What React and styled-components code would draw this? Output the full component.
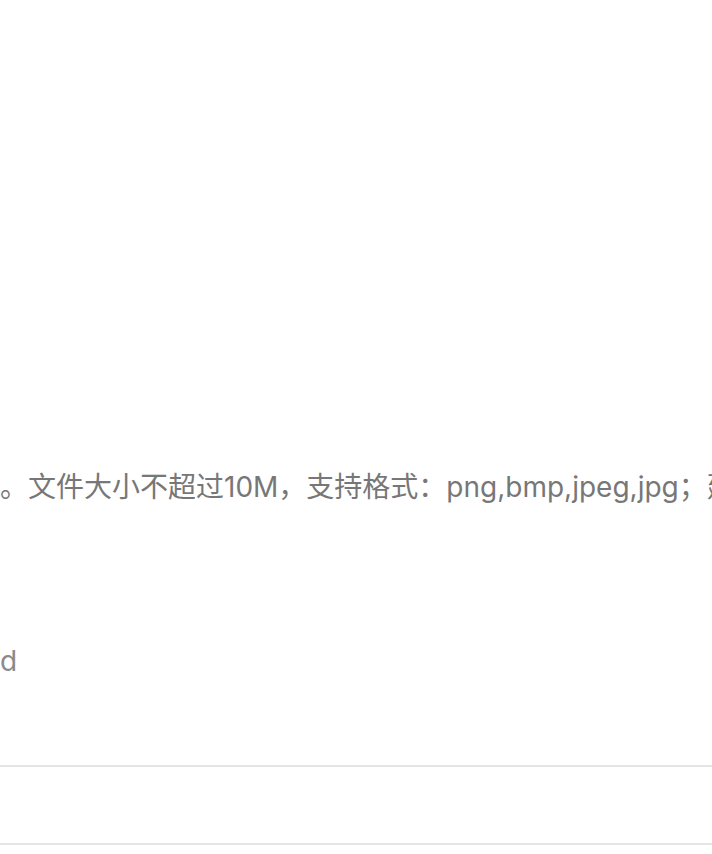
import styled, { createGlobalStyle } from 'styled-components';

const GlobalStyle = createGlobalStyle`
  html, body {
    margin: 0;
    padding: 0;
    background: #ffffff;
  }
  body {
    font-family: "Inter", "Noto Sans CJK SC", sans-serif;
  }
`;

/**
 * Page wrapper, clips the wide form horizontally.
 */
const Page = styled.div`
  width: 712px;
  height: 854px;
  overflow: hidden;
  display: flex;
  flex-direction: column;
  & > * {
    flex-shrink: 0;
  }
`;

const Blank = styled.div`
  height: ${({ h }) => h}px;
`;

/**
 * Upload hint line, too long for the screen.
 */
const Hint = styled.p`
  margin: 0;
  height: 40px;
  line-height: 40px;
  font-size: 28px;
  color: #777777;
  white-space: nowrap;
  overflow: hidden;
`;

const Value = styled.div`
  height: 40px;
  line-height: 40px;
  font-size: 28px;
  color: #8a8a8a;
  white-space: nowrap;
`;

const Cell = styled.div`
  height: 76px;
  border-top: 2px solid #e5e5e5;
`;

export default function App() {
  return (
    <>
      <GlobalStyle />
      <Page>
        <Blank h={467} />
        <Hint>。文件大小不超过10M，支持格式：png,bmp,jpeg,jpg；建</Hint>
        <Blank h={134} />
        <Value>d</Value>
        <Blank h={84} />
        <Cell />
        <Cell />
      </Page>
    </>
  );
}
